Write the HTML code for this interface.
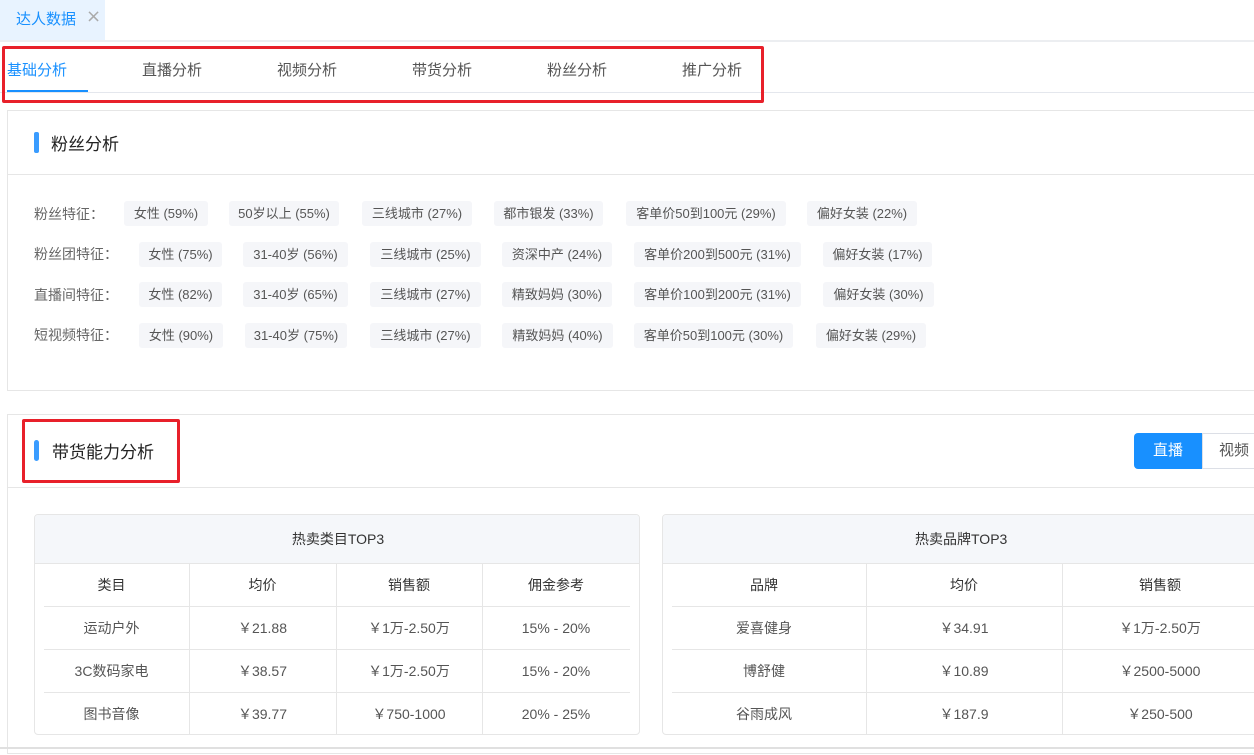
<!DOCTYPE html><html><head><meta charset="utf-8"><style>
*{margin:0;padding:0;box-sizing:border-box}
body{width:1254px;height:755px;overflow:hidden;background:#fff;font-family:"Liberation Sans","Noto Sans CJK SC",sans-serif;color:#333;position:relative}
.a{position:absolute}
.tag{position:absolute;height:25px;line-height:25px;background:#f5f6f9;border-radius:3px;font-size:13px;color:#555;text-align:center}
.lbl{position:absolute;font-size:14px;color:#666;left:34px}
.cell{position:absolute;text-align:center;font-size:14px;color:#555;line-height:43px;height:43px}
.hl{position:absolute;height:1px;background:#e6e6e6}
.vl{position:absolute;width:1px;background:#e6e6e6}
</style></head><body>
<div class="a" style="left:0;top:0;width:105px;height:40px;background:#e8f3ff"></div>
<div class="a" style="left:16px;top:8px;font-size:15px;color:#1890ff">达人数据</div>
<div class="a" style="left:86px;top:6px;font-size:18px;color:#aaa;font-family:'DejaVu Sans',sans-serif">×</div>
<div class="a" style="left:0;top:40px;width:1254px;height:2px;background:#eceef1"></div>
<div class="a" style="left:0;top:92px;width:1254px;height:1px;background:#e4e7ed"></div>
<div class="a" style="left:7px;top:59px;font-size:15px;color:#1890ff">基础分析</div>
<div class="a" style="left:142px;top:59px;font-size:15px;color:#555">直播分析</div>
<div class="a" style="left:277px;top:59px;font-size:15px;color:#555">视频分析</div>
<div class="a" style="left:412px;top:59px;font-size:15px;color:#555">带货分析</div>
<div class="a" style="left:547px;top:59px;font-size:15px;color:#555">粉丝分析</div>
<div class="a" style="left:682px;top:59px;font-size:15px;color:#555">推广分析</div>
<div class="a" style="left:7px;top:90px;width:81px;height:2px;background:#1890ff"></div>
<div class="a" style="left:2px;top:46px;width:762px;height:57px;border:3px solid #e8202a;border-radius:2px"></div>

<div class="a" style="left:7px;top:110px;width:1260px;height:281px;border:1px solid #e6e6e6"></div>
<div class="a" style="left:34px;top:132px;width:5px;height:21px;background:#3a9cff;border-radius:2px"></div>
<div class="a" style="left:51px;top:130px;font-size:17px;color:#222">粉丝分析</div>
<div class="a" style="left:7px;top:174px;width:1254px;height:1px;background:#e6e6e6"></div>

<div class="lbl" style="top:204px">粉丝特征：</div>
<div class="tag" style="left:124px;top:201px;width:84px">女性 (59%)</div>
<div class="tag" style="left:229px;top:201px;width:110px">50岁以上 (55%)</div>
<div class="tag" style="left:362px;top:201px;width:110px">三线城市 (27%)</div>
<div class="tag" style="left:494px;top:201px;width:109px">都市银发 (33%)</div>
<div class="tag" style="left:626px;top:201px;width:160px">客单价50到100元 (29%)</div>
<div class="tag" style="left:807px;top:201px;width:110px">偏好女装 (22%)</div>

<div class="lbl" style="top:244px">粉丝团特征：</div>
<div class="tag" style="left:139px;top:242px;width:83px">女性 (75%)</div>
<div class="tag" style="left:243px;top:242px;width:105px">31-40岁 (56%)</div>
<div class="tag" style="left:370px;top:242px;width:111px">三线城市 (25%)</div>
<div class="tag" style="left:502px;top:242px;width:110px">资深中产 (24%)</div>
<div class="tag" style="left:634px;top:242px;width:167px">客单价200到500元 (31%)</div>
<div class="tag" style="left:823px;top:242px;width:109px">偏好女装 (17%)</div>

<div class="lbl" style="top:285px">直播间特征：</div>
<div class="tag" style="left:139px;top:282px;width:83px">女性 (82%)</div>
<div class="tag" style="left:243px;top:282px;width:105px">31-40岁 (65%)</div>
<div class="tag" style="left:370px;top:282px;width:111px">三线城市 (27%)</div>
<div class="tag" style="left:502px;top:282px;width:110px">精致妈妈 (30%)</div>
<div class="tag" style="left:634px;top:282px;width:167px">客单价100到200元 (31%)</div>
<div class="tag" style="left:823px;top:282px;width:111px">偏好女装 (30%)</div>

<div class="lbl" style="top:325px">短视频特征：</div>
<div class="tag" style="left:139px;top:323px;width:84px">女性 (90%)</div>
<div class="tag" style="left:245px;top:323px;width:102px">31-40岁 (75%)</div>
<div class="tag" style="left:370px;top:323px;width:111px">三线城市 (27%)</div>
<div class="tag" style="left:502px;top:323px;width:111px">精致妈妈 (40%)</div>
<div class="tag" style="left:634px;top:323px;width:159px">客单价50到100元 (30%)</div>
<div class="tag" style="left:816px;top:323px;width:110px">偏好女装 (29%)</div>

<div class="a" style="left:7px;top:414px;width:1260px;height:340px;border:1px solid #e6e6e6"></div>
<div class="a" style="left:0;top:747px;width:1254px;height:2px;background:#e0e0e0"></div>
<div class="a" style="left:34px;top:440px;width:5px;height:21px;background:#3a9cff;border-radius:3px"></div>
<div class="a" style="left:52px;top:438px;font-size:17px;color:#222">带货能力分析</div>
<div class="a" style="left:22px;top:419px;width:158px;height:64px;border:3px solid #e8202a;border-radius:2px"></div>
<div class="a" style="left:7px;top:487px;width:1254px;height:1px;background:#e6e6e6"></div>
<div class="a" style="left:1134px;top:433px;width:68px;height:36px;background:#1890ff;border-radius:4px 0 0 4px;color:#fff;font-size:15px;text-align:center;line-height:36px">直播</div>
<div class="a" style="left:1202px;top:433px;width:60px;height:36px;border:1px solid #dcdfe6;color:#555;font-size:15px;line-height:34px;padding-left:16px">视频</div>

<div class="a" style="left:34px;top:514px;width:606px;height:221px;border:1px solid #e6e6e6;border-radius:4px;overflow:hidden">
<div class="a" style="left:0;top:0;width:606px;height:49px;background:#f5f7fa;border-bottom:1px solid #e6e6e6;text-align:center;line-height:49px;font-size:14px;color:#333">热卖类目TOP3</div>
</div>
<div class="vl" style="left:189px;top:563px;height:172px"></div>
<div class="vl" style="left:336px;top:563px;height:172px"></div>
<div class="vl" style="left:482px;top:563px;height:172px"></div>
<div class="hl" style="left:44px;top:606px;width:586px"></div>
<div class="hl" style="left:44px;top:649px;width:586px"></div>
<div class="hl" style="left:44px;top:692px;width:586px"></div>

<div class="a" style="left:662px;top:514px;width:610px;height:221px;border:1px solid #e6e6e6;border-radius:4px;overflow:hidden">
<div class="a" style="left:0;top:0;width:610px;height:49px;background:#f5f7fa;border-bottom:1px solid #e6e6e6;line-height:49px;font-size:14px;color:#333;padding-left:252px">热卖品牌TOP3</div>
</div>
<div class="vl" style="left:866px;top:563px;height:172px"></div>
<div class="vl" style="left:1062px;top:563px;height:172px"></div>
<div class="hl" style="left:672px;top:606px;width:590px"></div>
<div class="hl" style="left:672px;top:649px;width:590px"></div>
<div class="hl" style="left:672px;top:692px;width:590px"></div>

<div class="cell" style="left:34px;top:564px;width:155px;color:#333">类目</div>
<div class="cell" style="left:189px;top:564px;width:147px;color:#333">均价</div>
<div class="cell" style="left:336px;top:564px;width:146px;color:#333">销售额</div>
<div class="cell" style="left:482px;top:564px;width:148px;color:#333">佣金参考</div>
<div class="cell" style="left:34px;top:607px;width:155px">运动户外</div>
<div class="cell" style="left:189px;top:607px;width:147px">￥21.88</div>
<div class="cell" style="left:336px;top:607px;width:146px">￥1万-2.50万</div>
<div class="cell" style="left:482px;top:607px;width:148px">15% - 20%</div>
<div class="cell" style="left:34px;top:650px;width:155px">3C数码家电</div>
<div class="cell" style="left:189px;top:650px;width:147px">￥38.57</div>
<div class="cell" style="left:336px;top:650px;width:146px">￥1万-2.50万</div>
<div class="cell" style="left:482px;top:650px;width:148px">15% - 20%</div>
<div class="cell" style="left:34px;top:693px;width:155px">图书音像</div>
<div class="cell" style="left:189px;top:693px;width:147px">￥39.77</div>
<div class="cell" style="left:336px;top:693px;width:146px">￥750-1000</div>
<div class="cell" style="left:482px;top:693px;width:148px">20% - 25%</div>

<div class="cell" style="left:662px;top:564px;width:204px;color:#333">品牌</div>
<div class="cell" style="left:866px;top:564px;width:196px;color:#333">均价</div>
<div class="cell" style="left:1062px;top:564px;width:196px;color:#333">销售额</div>
<div class="cell" style="left:662px;top:607px;width:204px">爱喜健身</div>
<div class="cell" style="left:866px;top:607px;width:196px">￥34.91</div>
<div class="cell" style="left:1062px;top:607px;width:196px">￥1万-2.50万</div>
<div class="cell" style="left:662px;top:650px;width:204px">博舒健</div>
<div class="cell" style="left:866px;top:650px;width:196px">￥10.89</div>
<div class="cell" style="left:1062px;top:650px;width:196px">￥2500-5000</div>
<div class="cell" style="left:662px;top:693px;width:204px">谷雨成风</div>
<div class="cell" style="left:866px;top:693px;width:196px">￥187.9</div>
<div class="cell" style="left:1062px;top:693px;width:196px">￥250-500</div>
</body></html>
